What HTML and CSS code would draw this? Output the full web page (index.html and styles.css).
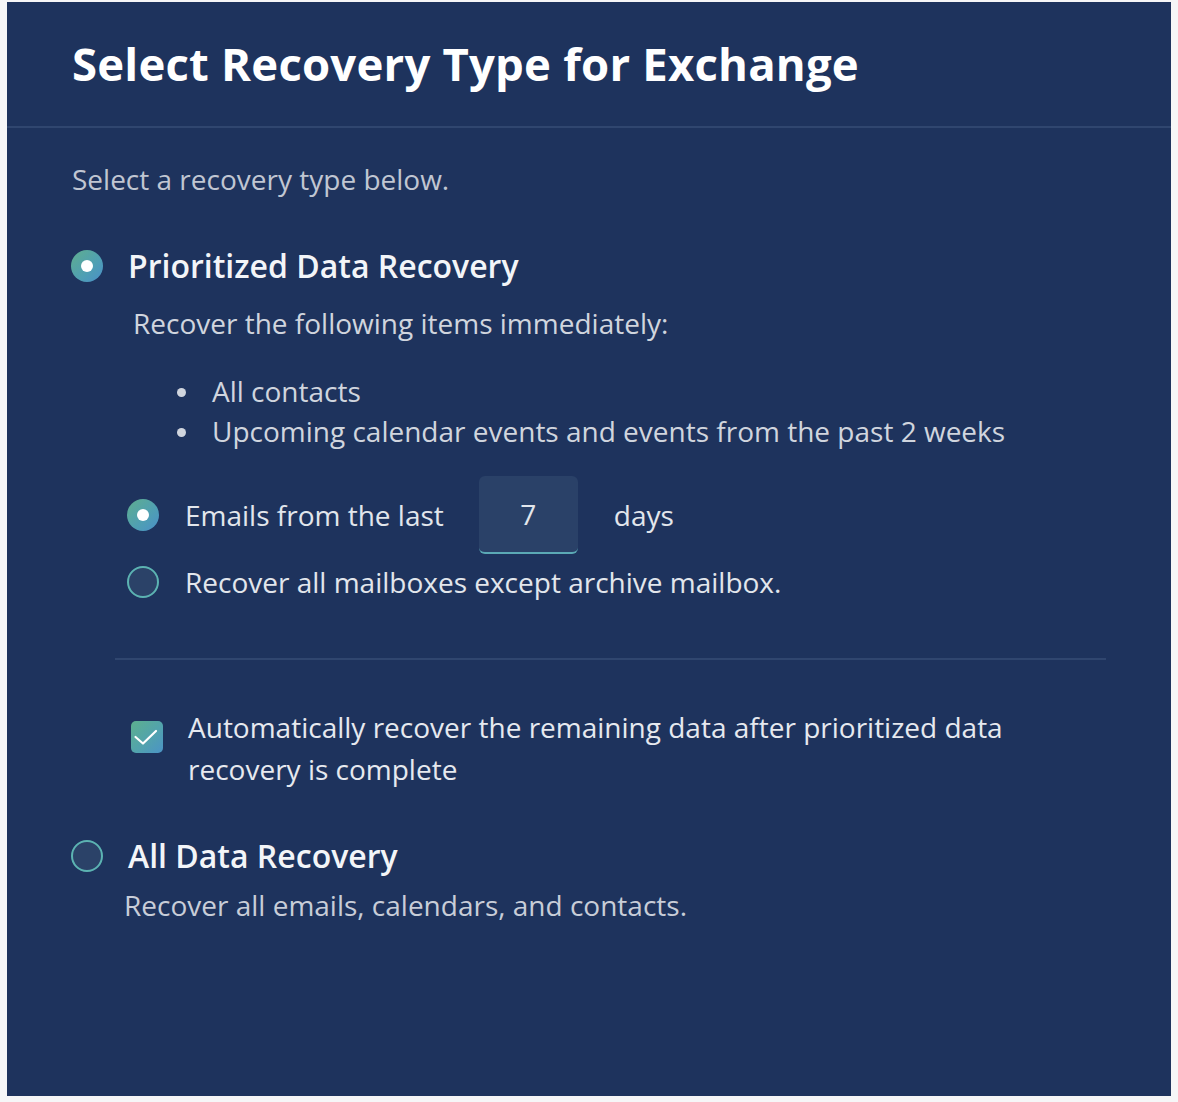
FILE: index.html
```html
<!DOCTYPE html>
<html>
<head>
<meta charset="utf-8">
<link rel="stylesheet" href="styles.css">
</head>
<body>
<div class="panel">
  <div class="header">
    <h1 class="title">Select Recovery Type for Exchange</h1>
  </div>
  <div class="body">
    <p class="intro">Select a recovery type below.</p>

    <div class="option">
      <span class="radio radio-on"></span>
      <span class="option-title">Prioritized Data Recovery</span>
    </div>
    <div class="sub">
      <p class="sub-lead">Recover the following items immediately:</p>
      <ul class="items">
        <li>All contacts</li>
        <li>Upcoming calendar events and events from the past 2 weeks</li>
      </ul>
      <div class="suboption first">
        <span class="radio radio-on"></span>
        <span class="sub-label">Emails from the last</span>
        <span class="days-input">7</span>
        <span class="sub-label">days</span>
      </div>
      <div class="suboption second">
        <span class="radio"></span>
        <span class="sub-label">Recover all mailboxes except archive mailbox.</span>
      </div>
      <div class="divider"></div>
      <div class="check-row">
        <span class="checkbox">
          <svg width="32" height="32" viewBox="0 0 32 32"><path d="M4.5 16 L12 22.5 L25 10" fill="none" stroke="#fff" stroke-width="2.2" stroke-linecap="round" stroke-linejoin="round"/></svg>
        </span>
        <span class="check-label">Automatically recover the remaining data after prioritized data recovery is complete</span>
      </div>
    </div>

    <div class="option option-all">
      <span class="radio"></span>
      <span class="option-title">All Data Recovery</span>
    </div>
    <p class="all-desc">Recover all emails, calendars, and contacts.</p>
  </div>
</div>
</body>
</html>
```
FILE: styles.css
```css
html, body {
  margin: 0;
  padding: 0;
  background: #f6f6f7;
}
body {
  font-family: "Open Sans", "Noto Sans", sans-serif;
  padding: 2px 0 0 7px;
}
.panel {
  width: 1164px;
  height: 1094px;
  background: #1e335d;
  color: #ffffff;
}
.header {
  height: 126px;
  border-bottom: 2px solid #30466f;
  padding-left: 65px;
  box-sizing: border-box;
  display: flex;
  align-items: center;
}
.title {
  margin: 0;
  font-size: 45.5px;
  font-weight: 700;
  line-height: 1;
  color: #ffffff;
  letter-spacing: 0.2px;
}
.body {
  padding: 33px 0 0 65px;
}
.intro {
  margin: 0;
  font-size: 28px;
  line-height: 36px;
  color: #c0c6d2;
}
.option {
  display: flex;
  align-items: center;
  margin-top: 49px;
  margin-left: -1px;
}
.option-title {
  font-size: 32px;
  font-weight: 600;
  margin-left: 25px;
  line-height: 40px;
  color: #f3f5f8;
}
.radio {
  width: 32px;
  height: 32px;
  box-sizing: border-box;
  border-radius: 50%;
  border: 2px solid #5cb3b2;
  background: #2b4268;
  flex-shrink: 0;
  position: relative;
}
.radio-on {
  border: none;
  background: linear-gradient(135deg, #5fae8e 0%, #4f9fb4 60%, #4a8fc8 100%);
}
.radio-on::after {
  content: "";
  position: absolute;
  left: 10px;
  top: 10px;
  width: 12px;
  height: 12px;
  border-radius: 50%;
  background: #ffffff;
}
.sub {
  padding-left: 61px;
}
.sub-lead {
  margin: 19px 0 0 0;
  font-size: 28px;
  line-height: 36px;
  color: #d0d5de;
}
.items {
  list-style: none;
  margin: 30px 0 0 0;
  padding-left: 44px;
  font-size: 28px;
  line-height: 40px;
  color: #d0d5de;
}
.items li {
  display: flex;
  align-items: center;
}
.items li::before {
  content: "";
  width: 9px;
  height: 9px;
  border-radius: 50%;
  background: #d0d5de;
  margin-right: 26px;
  margin-top: 2px;
  flex-shrink: 0;
}
.suboption {
  display: flex;
  align-items: center;
  margin-left: -6px;
}
.suboption.first {
  margin-top: 25px;
}
.suboption.second {
  margin-top: 8px;
}
.sub-label {
  font-size: 28px;
  line-height: 40px;
  color: #e2e6ec;
  margin-left: 26px;
}
.days-input {
  width: 99px;
  height: 78px;
  box-sizing: border-box;
  margin-left: 35px;
  margin-right: 10px;
  background: #2a4168;
  border-radius: 6px;
  border-bottom: 2px solid #5ba9b5;
  display: flex;
  align-items: center;
  justify-content: center;
  font-size: 28px;
  color: #e2e6ec;
}
.divider {
  height: 2px;
  background: #30466f;
  width: 991px;
  margin: 56px 0 0 -18px;
}
.check-row {
  display: flex;
  align-items: flex-start;
  margin-top: 46px;
  margin-left: -2px;
}
.checkbox {
  width: 32px;
  height: 32px;
  border-radius: 5px;
  background: linear-gradient(135deg, #5db08e 0%, #52a3ad 55%, #4b93c6 100%);
  display: flex;
  flex-shrink: 0;
  margin-top: 15px;
}
.check-label {
  font-size: 28px;
  line-height: 42px;
  color: #e6e9ef;
  margin-left: 25px;
  width: 840px;
}
.option-all {
  margin-top: 46px;
}
.all-desc {
  margin: 11px 0 0 52px;
  font-size: 28px;
  line-height: 36px;
  color: #c8cdd8;
}
```
